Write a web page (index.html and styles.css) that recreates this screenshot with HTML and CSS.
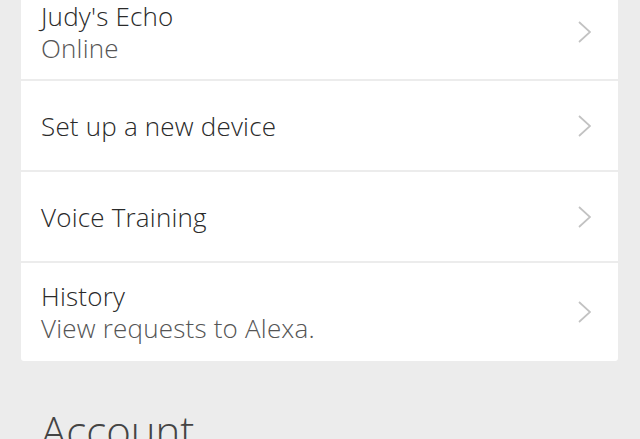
FILE: index.html
```html
<!DOCTYPE html>
<html lang="en">
<head>
  <meta charset="UTF-8">
  <meta name="viewport" content="width=device-width, initial-scale=1.0">
  <title>Settings</title>
  <link rel="stylesheet" href="styles.css">
</head>
<body>
  <div class="card">
    <!-- Device -->
    <div class="row tall">
      <div class="text">
        <div class="title">Judy's Echo</div>
        <div class="sub">Online</div>
      </div>
      <svg class="chevron" viewBox="0 0 13 22"><path d="M1 1 L12 11 L1 21"/></svg>
    </div>

    <div class="row">
      <div class="text">
        <div class="title">Set up a new device</div>
      </div>
      <svg class="chevron" viewBox="0 0 13 22"><path d="M1 1 L12 11 L1 21"/></svg>
    </div>

    <div class="row">
      <div class="text">
        <div class="title">Voice Training</div>
      </div>
      <svg class="chevron" viewBox="0 0 13 22"><path d="M1 1 L12 11 L1 21"/></svg>
    </div>

    <div class="row tall">
      <div class="text">
        <div class="title">History</div>
        <div class="sub">View requests to Alexa.</div>
      </div>
      <svg class="chevron" viewBox="0 0 13 22"><path d="M1 1 L12 11 L1 21"/></svg>
    </div>
  </div>

  <h2 class="heading">Account</h2>
</body>
</html>
```

FILE: styles.css
```css
body {
  margin: 0;
  padding: 0 21px 0 21px;
  background-color: #ececec;
  font-family: "Open Sans", Arial, sans-serif;
  font-weight: 300;
  overflow: hidden;
}

.card {
  background-color: #fff;
  margin-top: -16px;
  margin-right: 1px;
  border-radius: 3px;
}

.row {
  display: flex;
  align-items: center;
  justify-content: space-between;
  height: 89px;
  padding: 0 27px 0 20px;
  border-bottom: 2px solid #ececec;
}

.row.tall {
  height: 95px;
}

.row:last-child {
  border-bottom: none;
  height: 98px;
}

.title {
  font-size: 26px;
  line-height: 32px;
  letter-spacing: 0.2px;
  color: #2a2a2a;
}

.sub {
  font-size: 26px;
  line-height: 32px;
  letter-spacing: 0.2px;
  color: #555;
}

.chevron {
  width: 13px;
  height: 22px;
  fill: none;
  stroke: #c2c2c2;
  stroke-width: 1.7;
}

.heading {
  margin: 41px 0 0 20px;
  font-size: 42px;
  font-weight: 300;
  color: #444;
}
```
